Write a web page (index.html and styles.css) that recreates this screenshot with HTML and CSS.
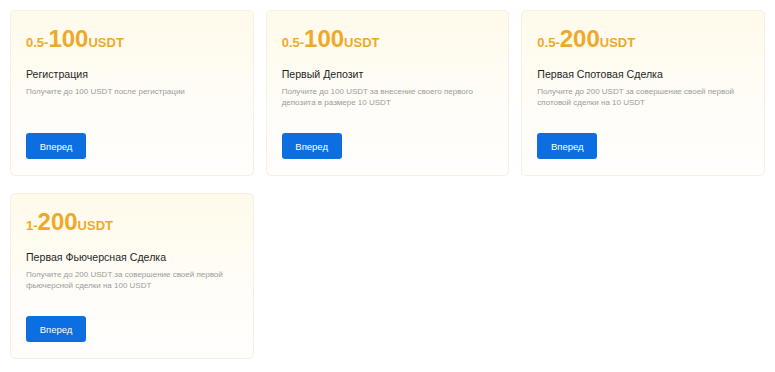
FILE: index.html
```html
<!DOCTYPE html>
<html lang="ru">
<head>
    <meta charset="UTF-8">
    <meta name="viewport" content="width=device-width, initial-scale=1.0">
    <title>Бонусы</title>
    <link rel="stylesheet" href="styles.css">
</head>
<body>
    <div class="tasks">
        <!-- Регистрация -->
        <div class="task-card">
            <div class="reward"><span class="small">0.5-</span><span class="big">100</span><span class="small">USDT</span></div>
            <h3>Регистрация</h3>
            <p>Получите до 100 USDT после регистрации</p>
            <button type="button">Вперед</button>
        </div>

        <!-- Первый депозит -->
        <div class="task-card">
            <div class="reward"><span class="small">0.5-</span><span class="big">100</span><span class="small">USDT</span></div>
            <h3>Первый Депозит</h3>
            <p>Получите до 100 USDT за внесение своего первого депозита в размере 10 USDT</p>
            <button type="button">Вперед</button>
        </div>

        <!-- Спот -->
        <div class="task-card">
            <div class="reward"><span class="small">0.5-</span><span class="big">200</span><span class="small">USDT</span></div>
            <h3>Первая Спотовая Сделка</h3>
            <p>Получите до 200 USDT за совершение своей первой спотовой сделки на 10 USDT</p>
            <button type="button">Вперед</button>
        </div>

        <!-- Фьючерсы -->
        <div class="task-card">
            <div class="reward"><span class="small">1-</span><span class="big">200</span><span class="small">USDT</span></div>
            <h3>Первая Фьючерсная Сделка</h3>
            <p>Получите до 200 USDT за совершение своей первой фьючерсной сделки на 100 USDT</p>
            <button type="button">Вперед</button>
        </div>
    </div>
</body>
</html>
```

FILE: styles.css
```css
body {
    font-family: "Liberation Sans", Arial, sans-serif;
    background-color: #fff;
    margin: 0;
    padding: 10px;
}

.tasks {
    display: grid;
    grid-template-columns: repeat(3, 1fr);
    column-gap: 12px;
    row-gap: 17px;
}

.task-card {
    display: flex;
    flex-direction: column;
    height: 166px;
    box-sizing: border-box;
    padding: 16px 15px 16px;
    border: 1px solid #f6f0e2;
    border-radius: 5px;
    background: linear-gradient(180deg, #fffaea 0%, #fffdf8 60%, #fffefc 100%);
}

.reward {
    color: #efa92a;
    font-weight: bold;
    line-height: 24px;
    height: 24px;
}

.reward .small {
    font-size: 13px;
}

.reward .big {
    font-size: 24px;
}

.task-card h3 {
    margin: 15.5px 0 0;
    font-size: 10.6px;
    font-weight: normal;
    color: #1f1f1f;
    line-height: 14px;
}

.task-card p {
    margin: 5px 0 0;
    font-size: 8px;
    color: #9b9b9b;
    line-height: 11px;
}

.task-card button {
    margin-top: auto;
    align-self: flex-start;
    width: 60px;
    height: 26px;
    padding: 0;
    border: none;
    border-radius: 3px;
    background-color: #0b6fe1;
    color: #fff;
    font-family: inherit;
    font-size: 9.5px;
    cursor: pointer;
}
```
